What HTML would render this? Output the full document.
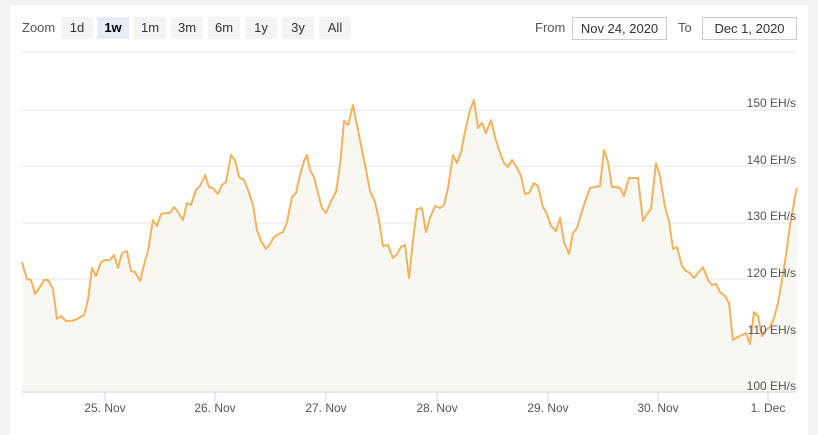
<!DOCTYPE html>
<html><head><meta charset="utf-8"><style>
html,body{margin:0;padding:0;background:#f2f2f2;width:818px;height:430px;overflow:hidden;font-family:"Liberation Sans",sans-serif}
.card{position:absolute;left:10px;top:5px;width:798px;height:430px;background:#fff}
.btn{position:absolute;top:17px;height:22px;line-height:22px;font-size:13px;color:#333;background:#f4f4f4;text-align:center;width:32px}
.inp{position:absolute;top:17px;height:21px;line-height:21px;border:1px solid #ccc;font-size:13px;color:#333;text-align:center;background:#fff}
.lbl{position:absolute;font-size:13px;color:#555}
</style></head><body>
<div class="card"></div>
<div class="lbl" style="left:22px;top:20px">Zoom</div>
<div class="btn" style="left:61px">1d</div>
<div class="btn" style="left:97px;background:#e6ebf5;font-weight:bold;color:#000">1w</div>
<div class="btn" style="left:134px">1m</div>
<div class="btn" style="left:171px">3m</div>
<div class="btn" style="left:208px">6m</div>
<div class="btn" style="left:245px">1y</div>
<div class="btn" style="left:282px">3y</div>
<div class="btn" style="left:319px">All</div>
<div class="lbl" style="left:535px;top:20px">From</div>
<div class="inp" style="left:572px;width:93px">Nov 24, 2020</div>
<div class="lbl" style="left:678px;top:20px">To</div>
<div class="inp" style="left:702px;width:93px">Dec 1, 2020</div>
<svg width="818" height="430" style="position:absolute;left:0;top:0">
<line x1="22" y1="52" x2="796" y2="52" stroke="#e6e6e6"/>
<g stroke="#e6e6e6"><line x1="22" y1="110" x2="796" y2="110"/><line x1="22" y1="166" x2="796" y2="166"/><line x1="22" y1="223" x2="796" y2="223"/><line x1="22" y1="279" x2="796" y2="279"/><line x1="22" y1="336" x2="796" y2="336"/></g>
<polygon fill="#f9f7f1" points="22,392 22,262 27,279 31,280 35,294 40,287 44,280 48,280 53,289 57,319 61,316 66,321 70,321 75,320 79,318 84,315 88,300 92,268 96,276 101,262 105,260 110,260 114,255 118,268 122,253 127,251 131,271 135,272 140,281 144,265 148,251 153,220 157,226 161,214 166,213 170,213 174,207 178,212 183,220 187,203 191,205 196,190 200,186 205,175 209,187 213,188 218,194 222,185 226,182 231,155 235,160 239,177 244,180 248,190 253,205 257,230 261,241 266,249 270,244 274,237 279,234 283,232 287,222 292,197 296,193 300,175 304,161 307,155 310,170 314,177 318,193 322,208 326,213 331,201 336,192 340,165 344,121 348,125 353,105 357,125 362,150 366,170 370,191 375,202 379,220 383,246 388,245 393,258 397,254 401,247 405,245 409,278 413,240 417,209 422,208 426,232 430,218 435,206 440,208 444,205 448,188 453,155 457,163 461,152 466,127 470,110 474,100 478,128 482,123 486,133 491,120 495,137 499,150 504,163 508,167 512,160 517,168 521,176 525,194 529,193 534,183 538,186 543,207 547,214 551,226 556,231 560,218 564,242 569,254 573,233 577,228 582,211 586,199 590,188 595,187 600,186 604,150 608,162 612,187 616,187 620,188 624,196 629,178 633,178 638,178 643,221 647,214 651,209 656,163 660,176 665,207 669,221 673,249 677,247 682,266 686,271 690,273 694,278 698,273 703,267 708,280 712,285 716,284 720,292 725,296 729,303 733,340 738,337 742,335 746,333 750,344 754,312 758,316 762,336 766,330 770,327 774,318 778,303 782,280 786,255 790,225 795,197 797,188 797,392"/>
<polyline fill="none" stroke="#f0b35e" stroke-width="2" stroke-linejoin="round" points="22,262 27,279 31,280 35,294 40,287 44,280 48,280 53,289 57,319 61,316 66,321 70,321 75,320 79,318 84,315 88,300 92,268 96,276 101,262 105,260 110,260 114,255 118,268 122,253 127,251 131,271 135,272 140,281 144,265 148,251 153,220 157,226 161,214 166,213 170,213 174,207 178,212 183,220 187,203 191,205 196,190 200,186 205,175 209,187 213,188 218,194 222,185 226,182 231,155 235,160 239,177 244,180 248,190 253,205 257,230 261,241 266,249 270,244 274,237 279,234 283,232 287,222 292,197 296,193 300,175 304,161 307,155 310,170 314,177 318,193 322,208 326,213 331,201 336,192 340,165 344,121 348,125 353,105 357,125 362,150 366,170 370,191 375,202 379,220 383,246 388,245 393,258 397,254 401,247 405,245 409,278 413,240 417,209 422,208 426,232 430,218 435,206 440,208 444,205 448,188 453,155 457,163 461,152 466,127 470,110 474,100 478,128 482,123 486,133 491,120 495,137 499,150 504,163 508,167 512,160 517,168 521,176 525,194 529,193 534,183 538,186 543,207 547,214 551,226 556,231 560,218 564,242 569,254 573,233 577,228 582,211 586,199 590,188 595,187 600,186 604,150 608,162 612,187 616,187 620,188 624,196 629,178 633,178 638,178 643,221 647,214 651,209 656,163 660,176 665,207 669,221 673,249 677,247 682,266 686,271 690,273 694,278 698,273 703,267 708,280 712,285 716,284 720,292 725,296 729,303 733,340 738,337 742,335 746,333 750,344 754,312 758,316 762,336 766,330 770,327 774,318 778,303 782,280 786,255 790,225 795,197 797,188"/>
<line x1="22" y1="392" x2="796" y2="392" stroke="#ccd6eb"/>
<g stroke="#ccd6eb"><line x1="105" y1="392" x2="105" y2="401"/><line x1="215" y1="392" x2="215" y2="401"/><line x1="326" y1="392" x2="326" y2="401"/><line x1="437" y1="392" x2="437" y2="401"/><line x1="548" y1="392" x2="548" y2="401"/><line x1="658" y1="392" x2="658" y2="401"/><line x1="768" y1="392" x2="768" y2="401"/></g>
<g font-family="Liberation Sans,sans-serif" font-size="12" fill="#555" text-anchor="end">
<text x="796" y="107">150 EH/s</text><text x="796" y="164">140 EH/s</text><text x="796" y="220">130 EH/s</text><text x="796" y="277">120 EH/s</text><text x="796" y="334">110 EH/s</text><text x="796" y="390">100 EH/s</text></g>
<g font-family="Liberation Sans,sans-serif" font-size="12" fill="#555" text-anchor="middle">
<text x="105" y="412">25. Nov</text><text x="215" y="412">26. Nov</text><text x="326" y="412">27. Nov</text><text x="437" y="412">28. Nov</text><text x="548" y="412">29. Nov</text><text x="658" y="412">30. Nov</text><text x="768" y="412">1. Dec</text></g>
</svg>
</body></html>
